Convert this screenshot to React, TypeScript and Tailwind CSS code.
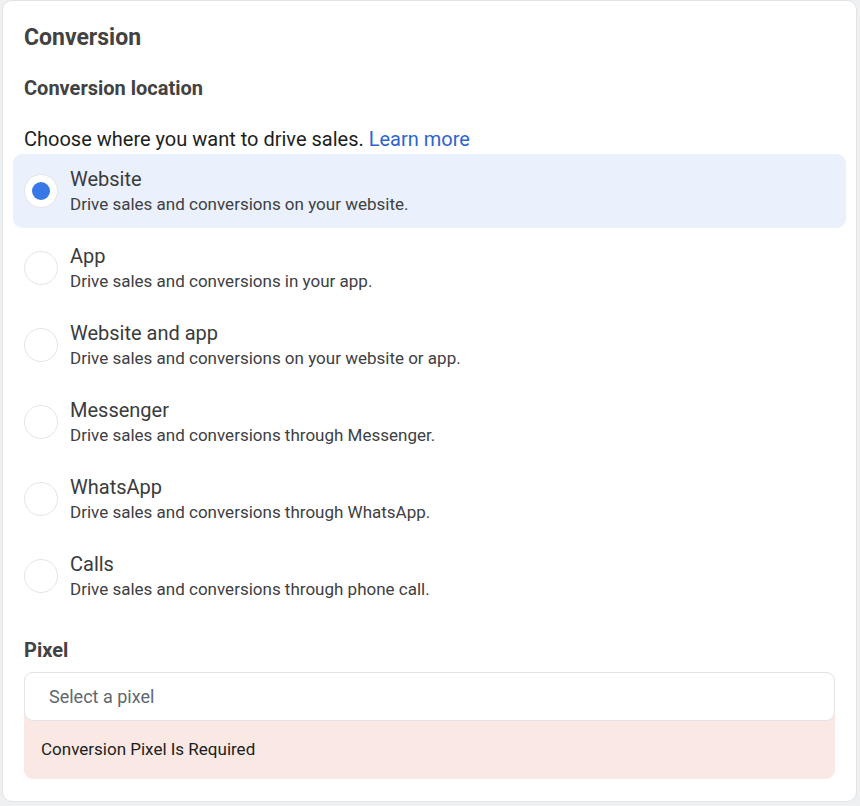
const options = [
  { title: "Website", desc: "Drive sales and conversions on your website." },
  { title: "App", desc: "Drive sales and conversions in your app." },
  { title: "Website and app", desc: "Drive sales and conversions on your website or app." },
  { title: "Messenger", desc: "Drive sales and conversions through Messenger." },
  { title: "WhatsApp", desc: "Drive sales and conversions through WhatsApp." },
  { title: "Calls", desc: "Drive sales and conversions through phone call." },
];

export default function App() {
  const selected = "Website";
  return (
    <div className="min-h-[806px] w-[860px] bg-[#eff0f1] pl-[2px] pr-[3px] pb-[4px] font-['Roboto',sans-serif]">
      <div className="h-[802px] rounded-[10px] border border-[#e2e3e5] bg-white px-[21px] pt-[23px]">
        <h2 className="text-[23px] leading-[28px] font-bold text-[#424242]">Conversion</h2>
        <h3 className="mt-[24px] text-[20px] leading-[24px] font-bold text-[#424242]">Conversion location</h3>
        <p className="mt-[26px] text-[20px] leading-[26px] text-[#1c1e21]">
          Choose where you want to drive sales.{" "}
          <a className="text-[#2d64d0]" href="#">Learn more</a>
        </p>
        <div className="-mx-[11px] mt-[2px] flex flex-col gap-[3px]">
          {options.map((o) => {
            const on = o.title === selected;
            return (
              <div
                key={o.title}
                className={`flex h-[74px] items-center gap-[12px] rounded-[9px] px-[11px] ${on ? "bg-[#eaf0fc]" : ""}`}
              >
                <span className="flex h-[34px] w-[34px] shrink-0 items-center justify-center rounded-full border border-[#e5e5e5] bg-white">
                  {on && <span className="h-[18px] w-[18px] rounded-full bg-[#3878e6]" />}
                </span>
                <div className="flex flex-col">
                  <span className="text-[20px] leading-[25px] text-[#3a3b3d]">{o.title}</span>
                  <span className="text-[17px] leading-[24px] text-[#3e4043]">{o.desc}</span>
                </div>
              </div>
            );
          })}
        </div>
        <h3 className="mt-[25px] text-[20px] leading-[24px] font-bold text-[#424242]">Pixel</h3>
        <div className="mt-[10px] rounded-[9px] bg-[#f9e8e4]">
          <div className="flex h-[49px] items-center rounded-[9px] border border-[#e4e4e4] bg-white px-[24px] text-[18px] text-[#606770]">
            Select a pixel
          </div>
          <div className="flex h-[58px] items-center px-[17px] text-[17px] text-[#1c1e21]">
            Conversion Pixel Is Required
          </div>
        </div>
      </div>
    </div>
  );
}
